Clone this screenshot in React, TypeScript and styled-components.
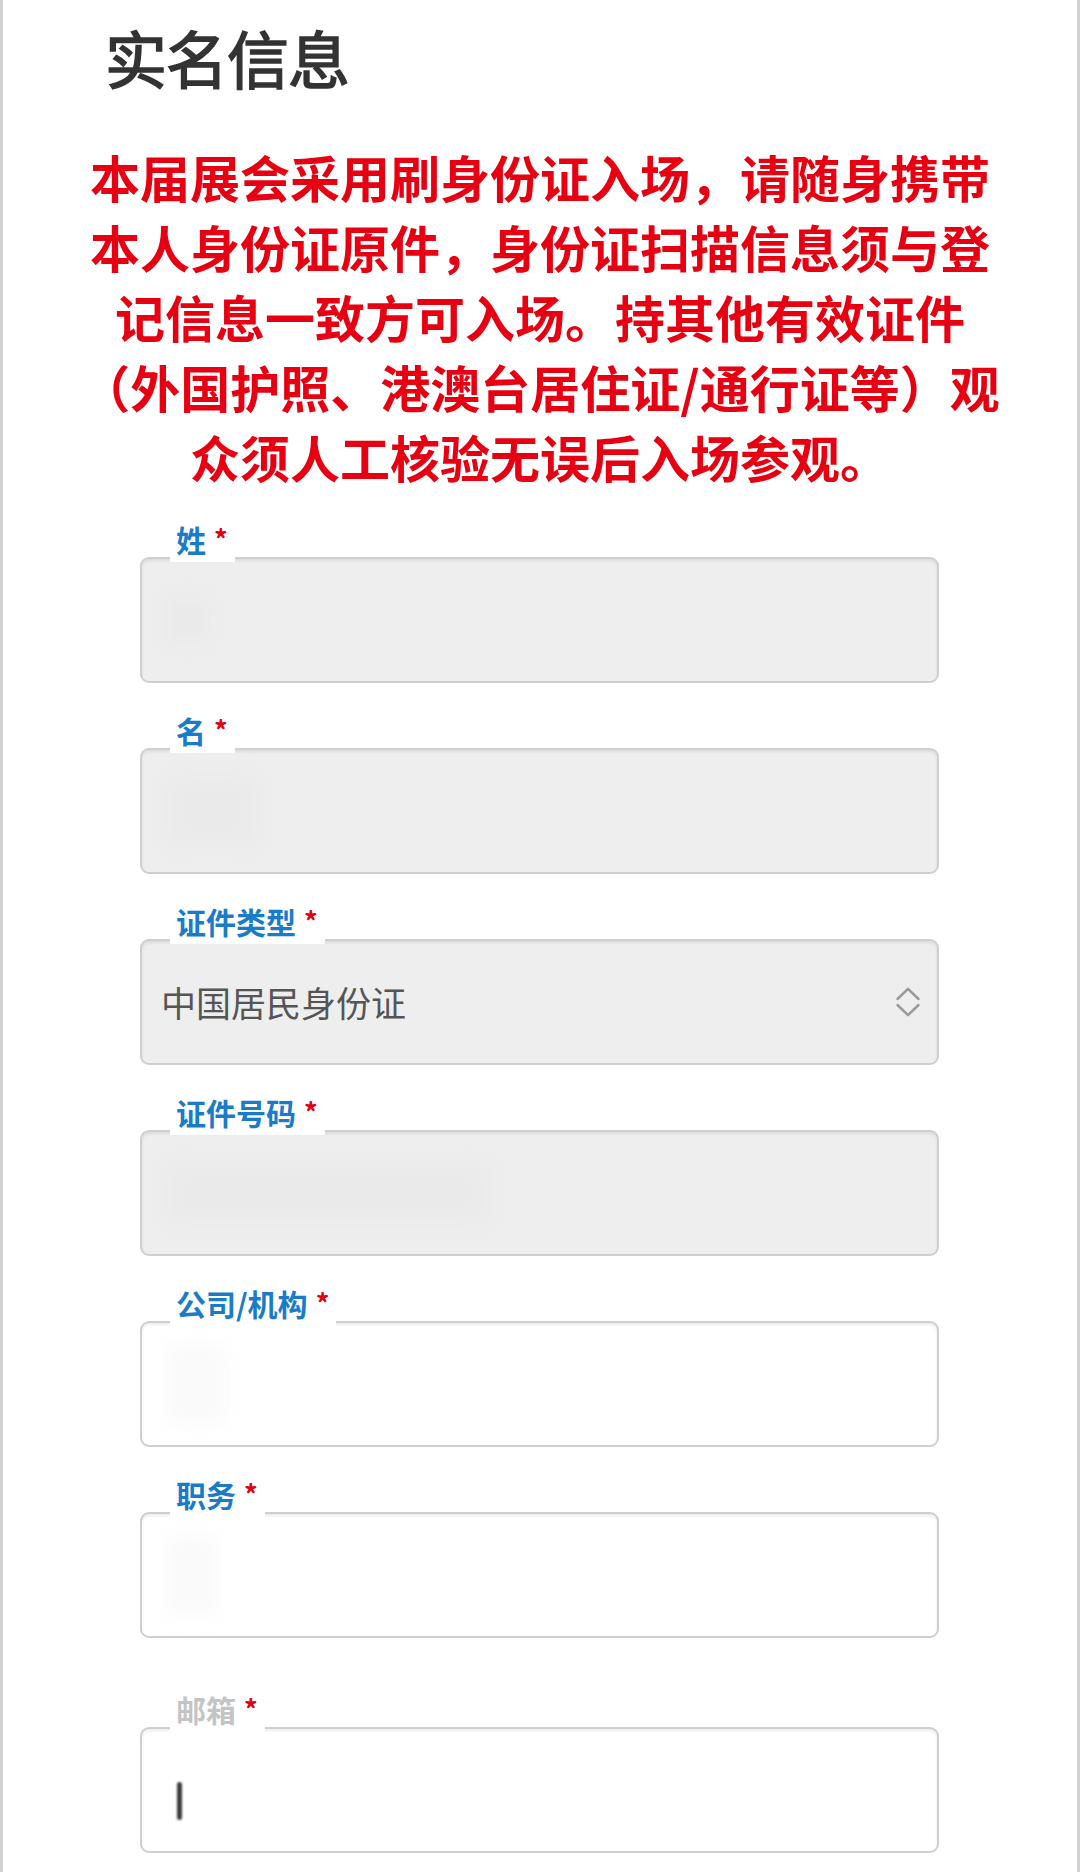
import React from "react";
import styled, { createGlobalStyle } from "styled-components";

const GlobalStyle = createGlobalStyle`
  html, body {
    margin: 0;
    padding: 0;
    background: #ffffff;
  }
  body {
    font-family: "Noto Sans CJK SC", "Noto Sans", sans-serif;
  }
  * { box-sizing: border-box; }
`;

const Page = styled.div`
  width: 1080px;
  min-height: 1872px;
  background: #ffffff;
  border-left: 3px solid #d2d2d2;
  border-right: 3px solid #d2d2d2;
  overflow: hidden;
`;

const Title = styled.h1`
  margin: 21px 0 0 102px;
  font-size: 62px;
  line-height: 72px;
  font-weight: 400;
  color: #333333;
  letter-spacing: -1px;
  -webkit-text-stroke: 1.6px #333333;
`;

const Notice = styled.p`
  margin: 48px 0 0;
  text-align: center;
  font-size: 50px;
  line-height: 70px;
  font-weight: 700;
  color: #e60012;
  white-space: nowrap;
`;

const Form = styled.div`
  display: flex;
  flex-direction: column;
  padding: 30px 138px 0 137px;
`;

const Field = styled.div<{ $extraTop?: number }>`
  display: flex;
  flex-direction: column;
  align-items: flex-start;
  margin-top: ${(p) => (p.$extraTop ? 29 + p.$extraTop : 29)}px;
  &:first-child {
    margin-top: 0;
  }
`;

const LabelChip = styled.div<{ $muted?: boolean }>`
  position: relative;
  z-index: 1;
  display: inline-flex;
  align-items: flex-start;
  margin: 0 0 -5px 30px;
  padding: 0 7px 5px 6px;
  background: #ffffff;
  font-size: 30px;
  line-height: 36px;
  font-weight: 700;
  color: ${(p) => (p.$muted ? "#c4c4c4" : "#1a7cc8")};
`;

const Star = styled.span`
  margin-left: 8px;
  font-size: 27px;
  line-height: 36px;
  font-weight: 700;
  color: #e00010;
`;

const Box = styled.div<{ $disabled?: boolean }>`
  position: relative;
  width: 100%;
  height: 126px;
  display: flex;
  align-items: center;
  padding: 0 16px 0 19px;
  border: 2px solid #cfcfcf;
  border-radius: 9px;
  background: ${(p) => (p.$disabled ? "#eeeeee" : "#ffffff")};
  box-shadow: inset 0 2px 3px rgba(0, 0, 0, 0.08);
`;

const Value = styled.span`
  flex: 1;
  font-size: 35px;
  line-height: 44px;
  font-weight: 400;
  color: #555555;
`;

const Blur = styled.span<{ $w: number; $h: number; $tone: string }>`
  display: inline-block;
  width: ${(p) => p.$w}px;
  height: ${(p) => p.$h}px;
  margin-left: 6px;
  background: ${(p) => p.$tone};
  border-radius: 10px;
  filter: blur(9px);
`;

const Caret = styled.span`
  display: inline-block;
  width: 5px;
  height: 38px;
  margin-left: 16px;
  margin-top: 22px;
  background: #3c3c3c;
  border-radius: 3px;
  filter: blur(0.8px);
`;

const Chevrons = () => (
  <svg width="26" height="30" viewBox="0 0 26 30" fill="none">
    <polyline
      points="2.5,12 13,1.8 23.5,12"
      stroke="#9a9a9a"
      strokeWidth="2.5"
      strokeLinecap="round"
      strokeLinejoin="round"
    />
    <polyline
      points="2.5,18 13,28.2 23.5,18"
      stroke="#9a9a9a"
      strokeWidth="2.5"
      strokeLinecap="round"
      strokeLinejoin="round"
    />
  </svg>
);

type FieldDef = {
  label: string;
  disabled?: boolean;
  muted?: boolean;
  extraTop?: number;
  content?: React.ReactNode;
};

const fields: FieldDef[] = [
  { label: "姓", disabled: true, content: <Blur $w={40} $h={44} $tone="#e9e9e9" /> },
  { label: "名", disabled: true, content: <Blur $w={90} $h={70} $tone="#eaeaea" /> },
  {
    label: "证件类型",
    disabled: true,
    content: (
      <>
        <Value>中国居民身份证</Value>
        <Chevrons />
      </>
    ),
  },
  { label: "证件号码", disabled: true, content: <Blur $w={320} $h={60} $tone="#eaeaea" /> },
  { label: "公司/机构", content: <Blur $w={60} $h={80} $tone="#fafafa" /> },
  { label: "职务", content: <Blur $w={50} $h={80} $tone="#fafafa" /> },
  { label: "邮箱", muted: true, extraTop: 24, content: <Caret /> },
];

export default function App() {
  return (
    <>
      <GlobalStyle />
      <Page>
        <Title>实名信息</Title>
        <Notice>
          本届展会采用刷身份证入场，请随身携带
          <br />
          本人身份证原件，身份证扫描信息须与登
          <br />
          记信息一致方可入场。持其他有效证件
          <br />
          （外国护照、港澳台居住证/通行证等）观
          <br />
          众须人工核验无误后入场参观。
        </Notice>
        <Form>
          {fields.map((f) => (
            <Field key={f.label} $extraTop={f.extraTop}>
              <LabelChip $muted={f.muted}>
                {f.label}
                <Star>*</Star>
              </LabelChip>
              <Box $disabled={f.disabled}>{f.content}</Box>
            </Field>
          ))}
        </Form>
      </Page>
    </>
  );
}
